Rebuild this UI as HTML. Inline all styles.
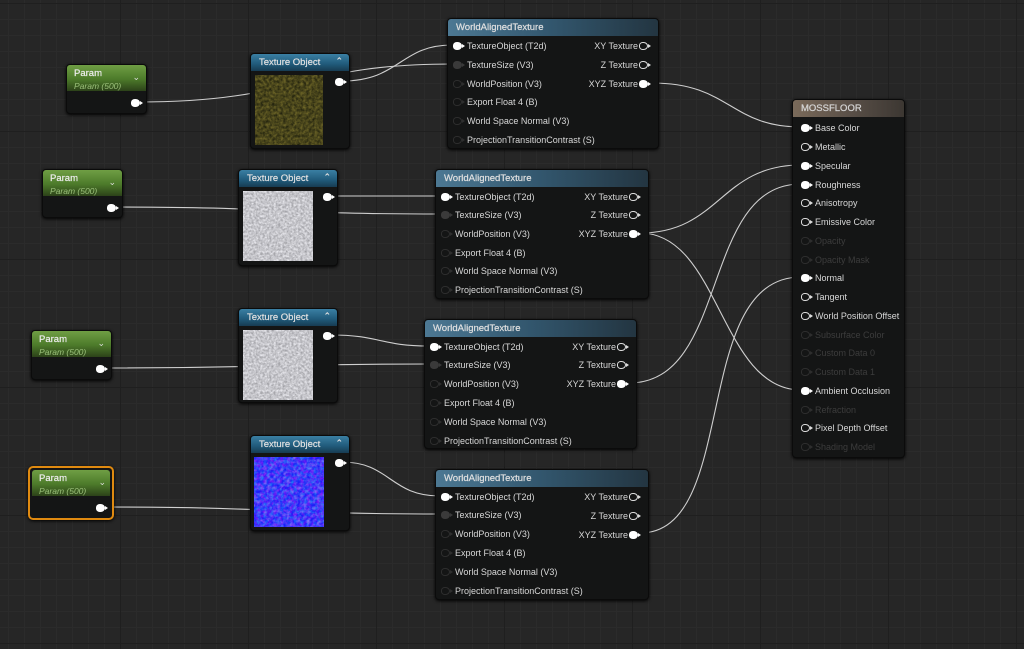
<!DOCTYPE html>
<html><head><meta charset="utf-8"><style>
*{margin:0;padding:0;box-sizing:border-box}
body{width:1024px;height:649px;overflow:hidden;background:#262626;font-family:"Liberation Sans",sans-serif;position:relative;
background-image:linear-gradient(#1f1f1f 1px,transparent 1px),linear-gradient(90deg,#1f1f1f 1px,transparent 1px),linear-gradient(#2b2b2b 1px,transparent 1px),linear-gradient(90deg,#2b2b2b 1px,transparent 1px);
background-size:128px 128px,128px 128px,16px 16px,16px 16px;background-position:-8px 3px,-8px 3px,-8px 3px,-8px 3px}
.n{position:absolute;background:#141515;border-radius:4px;box-shadow:0 1px 3px #000;border:1px solid #0b0b0b}
.h{height:17px;border-radius:3px 3px 0 0;color:#e0e0e0;font-size:9.5px;padding:3px 0 0 8px;position:relative;-webkit-text-stroke:.2px #e0e0e0}
.blue{background:linear-gradient(#3a7fa3,#205a7a 60%,#173c52)}
.wat{background:linear-gradient(90deg,#4c7893,#32566d 50%,#233541)}
.mat{background:linear-gradient(90deg,#7a6a5a,#5a5048 50%,#3c3732);color:#d0d0d0}
.car{position:absolute;right:6px;top:2px;font-size:9px;color:#ddd}
.pg{position:absolute;height:26px;left:0;right:0;top:0;border-radius:3px 3px 0 0;background:linear-gradient(#6f9e44,#4c7a2a 55%,#2c4219);padding:3px 0 0 7px;color:#eee;font-size:9.5px;-webkit-text-stroke:.2px #eee}
.pg i{display:block;font-style:italic;color:#9bc07a;font-size:8.5px;margin-top:2px;-webkit-text-stroke:0}
.r{position:absolute;font-size:9px;color:#d8d8d8;white-space:nowrap}
.d{color:#3c3c3c}
.pin{position:absolute;width:9px;height:8px;border-radius:50% 60% 60% 50%;background:#fff}
.pin:after{content:"";position:absolute;right:-3px;top:2px;border-left:3px solid #fff;border-top:2px solid transparent;border-bottom:2px solid transparent}
.pin.o{background:transparent;border:1.5px solid #ddd}
.pin.o:after{border-left-color:#ddd;right:-4px;top:1px}
.pin.g{background:#3a3a3a}.pin.g:after{border-left-color:#3a3a3a}
.pin.k,.pin.ok{background:transparent;border:1.5px solid #2e2e2e}.pin.k:after,.pin.ok:after{border-left-color:#2e2e2e;right:-4px;top:1px}
.tex{position:absolute}
svg.w{position:absolute;left:0;top:0}
</style></head><body>
<svg class="w" width="1024" height="649" viewBox="0 0 1024 649" fill="none" stroke="#cfcfcf" stroke-width="1.1">
<path d="M138 102 C300 102 300 64 452 64"/>
<path d="M342 81 C400 81 400 45 452 45"/>
<path d="M114 207 C280 207 280 214 440 214"/>
<path d="M331 196 C380 196 380 196 440 196"/>
<path d="M103 368 C270 368 270 364 429 364"/>
<path d="M331 335 C380 335 380 346 429 346"/>
<path d="M103 507 C280 507 280 514 440 514"/>
<path d="M342 462 C390 462 390 496 440 496"/>
<path d="M652 83 C730 83 730 127 801 127"/>
<path d="M640 233 C720 233 720 165 801 165"/>
<path d="M640 233 C720 233 720 390 801 390"/>
<path d="M629 383 C730 383 700 184 801 184"/>
<path d="M640 533 C740 533 690 277 801 277"/>
</svg>
<svg width="0" height="0" style="position:absolute"><defs>
<filter id="moss" color-interpolation-filters="sRGB"><feTurbulence type="fractalNoise" baseFrequency="0.35" numOctaves="3" seed="2"/><feColorMatrix values=".45 0 0 0 .06  .4 0 0 0 .07  .15 0 0 0 .03  0 0 0 0 1"/></filter>
<filter id="wh" color-interpolation-filters="sRGB"><feTurbulence type="fractalNoise" baseFrequency="0.45" numOctaves="3" seed="5"/><feColorMatrix values=".45 0 0 0 .55  .45 0 0 0 .55  .45 0 0 0 .57  0 0 0 0 1"/></filter>
<filter id="nm" color-interpolation-filters="sRGB"><feTurbulence type="fractalNoise" baseFrequency="0.3" numOctaves="3" seed="9"/><feColorMatrix values="1.6 0 0 0 -.5  0 1.4 0 0 -.45  0 0 0 0 1  0 0 0 0 1"/></filter>
</defs></svg>

<div class="n" style="left:66px;top:64px;width:81px;height:50px"><div class="pg">Param<i>Param (500)</i></div><span class="car" style="top:7px">⌄</span><div class="pin" style="left:64px;top:34px"></div></div>
<div class="n" style="left:42px;top:169px;width:81px;height:49px"><div class="pg">Param<i>Param (500)</i></div><span class="car" style="top:7px">⌄</span><div class="pin" style="left:64px;top:34px"></div></div>
<div class="n" style="left:31px;top:330px;width:81px;height:50px"><div class="pg">Param<i>Param (500)</i></div><span class="car" style="top:7px">⌄</span><div class="pin" style="left:64px;top:34px"></div></div>
<div class="n" style="left:28px;top:466px;width:86px;height:54px;border:2px solid #e08a10;border-radius:5px"><div class="pg" style="left:2px;right:2px;top:2px">Param<i>Param (500)</i></div><span class="car" style="top:9px">⌄</span><div class="pin" style="left:66px;top:36px"></div></div>

<div class="n" style="left:250px;top:53px;width:100px;height:96px"><div class="h blue">Texture Object<span class="car">⌃</span></div><svg class="tex" style="left:4px;top:21px" width="68" height="70"><rect width="68" height="70" filter="url(#moss)"/></svg><div class="pin" style="left:84px;top:24px"></div></div>
<div class="n" style="left:238px;top:169px;width:100px;height:97px"><div class="h blue">Texture Object<span class="car">⌃</span></div><svg class="tex" style="left:4px;top:21px" width="70" height="70"><rect width="70" height="70" filter="url(#wh)"/></svg><div class="pin" style="left:84px;top:23px"></div></div>
<div class="n" style="left:238px;top:308px;width:100px;height:95px"><div class="h blue">Texture Object<span class="car">⌃</span></div><svg class="tex" style="left:4px;top:21px" width="70" height="70"><rect width="70" height="70" filter="url(#wh)"/></svg><div class="pin" style="left:84px;top:23px"></div></div>
<div class="n" style="left:250px;top:435px;width:100px;height:96px"><div class="h blue">Texture Object<span class="car">⌃</span></div><svg class="tex" style="left:3px;top:21px" width="70" height="70"><rect width="70" height="70" fill="#3a3af0"/><rect width="70" height="70" filter="url(#nm)" opacity=".5"/></svg><div class="pin" style="left:84px;top:23px"></div></div>

<div class="n" style="left:447px;top:18px;width:212px;height:131px"><div class="h wat">WorldAlignedTexture</div>
<div class="pin" style="left:5px;top:23px"></div><div class="r" style="left:19px;top:22px">TextureObject (T2d)</div>
<div class="pin g" style="left:5px;top:42px"></div><div class="r" style="left:19px;top:41px">TextureSize (V3)</div>
<div class="pin ok" style="left:5px;top:61px"></div><div class="r" style="left:19px;top:60px">WorldPosition (V3)</div>
<div class="pin ok" style="left:5px;top:79px"></div><div class="r" style="left:19px;top:78px">Export Float 4 (B)</div>
<div class="pin ok" style="left:5px;top:98px"></div><div class="r" style="left:19px;top:97px">World Space Normal (V3)</div>
<div class="pin ok" style="left:5px;top:117px"></div><div class="r" style="left:19px;top:116px">ProjectionTransitionContrast (S)</div>
<div class="r" style="right:20px;top:22px">XY Texture</div><div class="pin o" style="right:10px;top:23px"></div>
<div class="r" style="right:20px;top:41px">Z Texture</div><div class="pin o" style="right:10px;top:42px"></div>
<div class="r" style="right:20px;top:60px">XYZ Texture</div><div class="pin" style="right:10px;top:61px"></div>
</div>
<div class="n" style="left:435px;top:169px;width:214px;height:130px"><div class="h wat">WorldAlignedTexture</div>
<div class="pin" style="left:5px;top:23px"></div><div class="r" style="left:19px;top:22px">TextureObject (T2d)</div>
<div class="pin g" style="left:5px;top:41px"></div><div class="r" style="left:19px;top:40px">TextureSize (V3)</div>
<div class="pin ok" style="left:5px;top:60px"></div><div class="r" style="left:19px;top:59px">WorldPosition (V3)</div>
<div class="pin ok" style="left:5px;top:79px"></div><div class="r" style="left:19px;top:78px">Export Float 4 (B)</div>
<div class="pin ok" style="left:5px;top:97px"></div><div class="r" style="left:19px;top:96px">World Space Normal (V3)</div>
<div class="pin ok" style="left:5px;top:116px"></div><div class="r" style="left:19px;top:115px">ProjectionTransitionContrast (S)</div>
<div class="r" style="right:20px;top:22px">XY Texture</div><div class="pin o" style="right:10px;top:23px"></div>
<div class="r" style="right:20px;top:40px">Z Texture</div><div class="pin o" style="right:10px;top:41px"></div>
<div class="r" style="right:20px;top:59px">XYZ Texture</div><div class="pin" style="right:10px;top:60px"></div>
</div>
<div class="n" style="left:424px;top:319px;width:213px;height:130px"><div class="h wat">WorldAlignedTexture</div>
<div class="pin" style="left:5px;top:23px"></div><div class="r" style="left:19px;top:22px">TextureObject (T2d)</div>
<div class="pin g" style="left:5px;top:41px"></div><div class="r" style="left:19px;top:40px">TextureSize (V3)</div>
<div class="pin ok" style="left:5px;top:60px"></div><div class="r" style="left:19px;top:59px">WorldPosition (V3)</div>
<div class="pin ok" style="left:5px;top:79px"></div><div class="r" style="left:19px;top:78px">Export Float 4 (B)</div>
<div class="pin ok" style="left:5px;top:98px"></div><div class="r" style="left:19px;top:97px">World Space Normal (V3)</div>
<div class="pin ok" style="left:5px;top:117px"></div><div class="r" style="left:19px;top:116px">ProjectionTransitionContrast (S)</div>
<div class="r" style="right:20px;top:22px">XY Texture</div><div class="pin o" style="right:10px;top:23px"></div>
<div class="r" style="right:20px;top:40px">Z Texture</div><div class="pin o" style="right:10px;top:41px"></div>
<div class="r" style="right:20px;top:59px">XYZ Texture</div><div class="pin" style="right:10px;top:60px"></div>
</div>
<div class="n" style="left:435px;top:469px;width:214px;height:131px"><div class="h wat">WorldAlignedTexture</div>
<div class="pin" style="left:5px;top:23px"></div><div class="r" style="left:19px;top:22px">TextureObject (T2d)</div>
<div class="pin g" style="left:5px;top:41px"></div><div class="r" style="left:19px;top:40px">TextureSize (V3)</div>
<div class="pin ok" style="left:5px;top:60px"></div><div class="r" style="left:19px;top:59px">WorldPosition (V3)</div>
<div class="pin ok" style="left:5px;top:79px"></div><div class="r" style="left:19px;top:78px">Export Float 4 (B)</div>
<div class="pin ok" style="left:5px;top:98px"></div><div class="r" style="left:19px;top:97px">World Space Normal (V3)</div>
<div class="pin ok" style="left:5px;top:117px"></div><div class="r" style="left:19px;top:116px">ProjectionTransitionContrast (S)</div>
<div class="r" style="right:20px;top:22px">XY Texture</div><div class="pin o" style="right:10px;top:23px"></div>
<div class="r" style="right:20px;top:41px">Z Texture</div><div class="pin o" style="right:10px;top:42px"></div>
<div class="r" style="right:20px;top:60px">XYZ Texture</div><div class="pin" style="right:10px;top:61px"></div>
</div>

<div class="n" style="left:792px;top:99px;width:113px;height:359px"><div class="h mat">MOSSFLOOR</div>
<div class="pin" style="left:8px;top:24px"></div><div class="r" style="left:22px;top:23px">Base Color</div>
<div class="pin o" style="left:8px;top:43px"></div><div class="r" style="left:22px;top:42px">Metallic</div>
<div class="pin" style="left:8px;top:62px"></div><div class="r" style="left:22px;top:61px">Specular</div>
<div class="pin" style="left:8px;top:81px"></div><div class="r" style="left:22px;top:80px">Roughness</div>
<div class="pin o" style="left:8px;top:99px"></div><div class="r" style="left:22px;top:98px">Anisotropy</div>
<div class="pin o" style="left:8px;top:118px"></div><div class="r" style="left:22px;top:117px">Emissive Color</div>
<div class="pin k" style="left:8px;top:137px"></div><div class="r d" style="left:22px;top:136px">Opacity</div>
<div class="pin k" style="left:8px;top:156px"></div><div class="r d" style="left:22px;top:155px">Opacity Mask</div>
<div class="pin" style="left:8px;top:174px"></div><div class="r" style="left:22px;top:173px">Normal</div>
<div class="pin o" style="left:8px;top:193px"></div><div class="r" style="left:22px;top:192px">Tangent</div>
<div class="pin o" style="left:8px;top:212px"></div><div class="r" style="left:22px;top:211px">World Position Offset</div>
<div class="pin k" style="left:8px;top:231px"></div><div class="r d" style="left:22px;top:230px">Subsurface Color</div>
<div class="pin k" style="left:8px;top:249px"></div><div class="r d" style="left:22px;top:248px">Custom Data 0</div>
<div class="pin k" style="left:8px;top:268px"></div><div class="r d" style="left:22px;top:267px">Custom Data 1</div>
<div class="pin" style="left:8px;top:287px"></div><div class="r" style="left:22px;top:286px">Ambient Occlusion</div>
<div class="pin k" style="left:8px;top:306px"></div><div class="r d" style="left:22px;top:305px">Refraction</div>
<div class="pin o" style="left:8px;top:324px"></div><div class="r" style="left:22px;top:323px">Pixel Depth Offset</div>
<div class="pin k" style="left:8px;top:343px"></div><div class="r d" style="left:22px;top:342px">Shading Model</div>
</div>
</body></html>
